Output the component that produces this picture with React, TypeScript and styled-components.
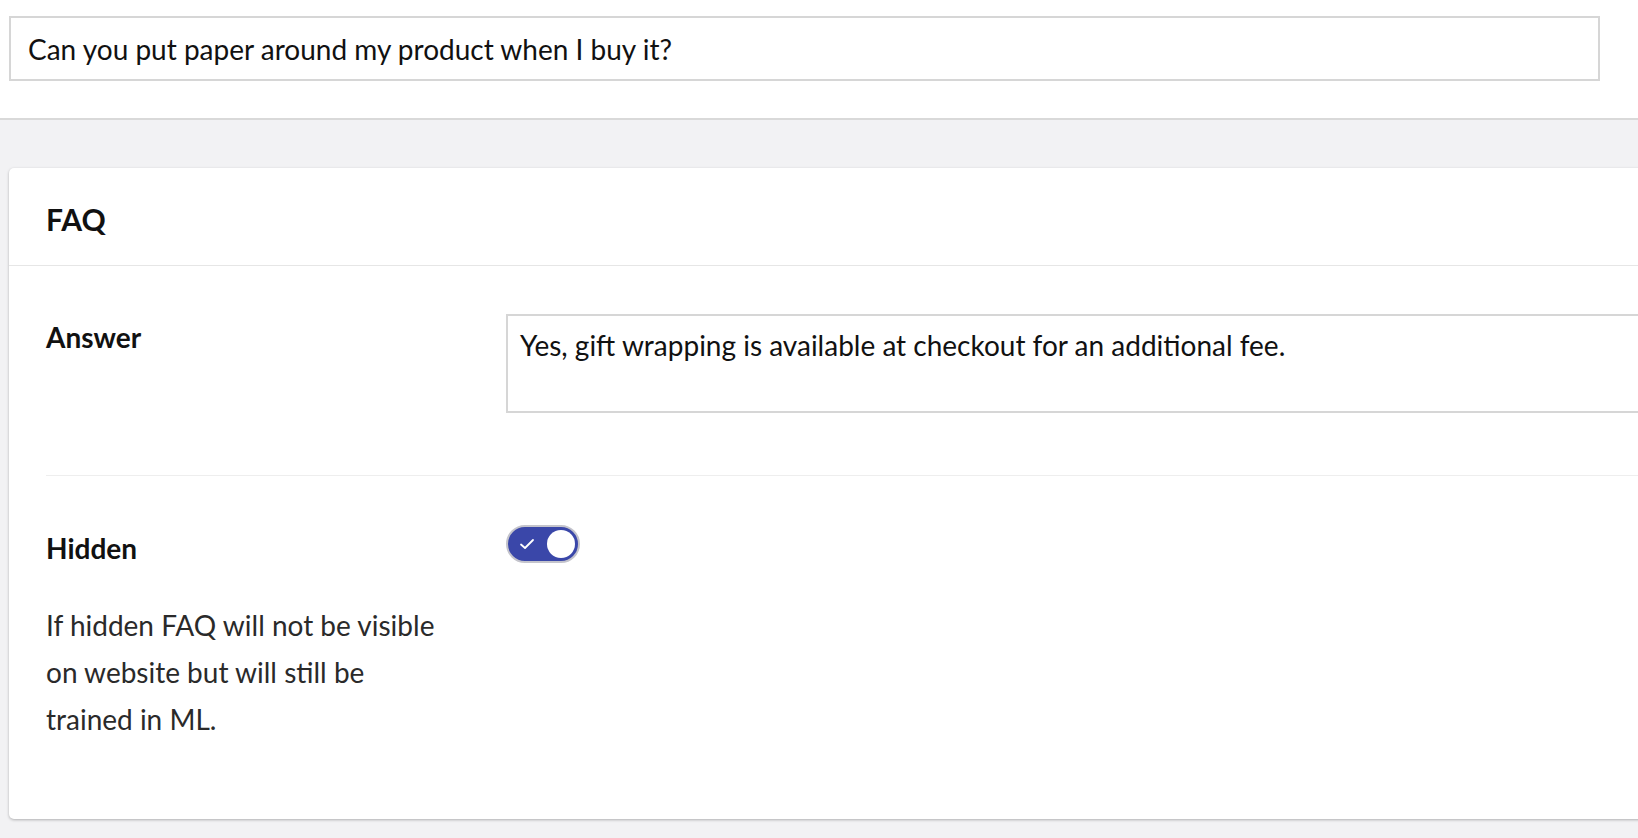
import type { FC } from 'react';
import styled, { createGlobalStyle } from 'styled-components';

const GlobalStyle = createGlobalStyle`
  html, body {
    margin: 0;
    padding: 0;
    background: #f2f2f4;
    font-family: Lato, "Open Sans", sans-serif;
    color: #111;
    overflow: hidden;
  }
  * {
    box-sizing: border-box;
  }
`;

const Page = styled.div`
  min-height: 838px;
  background: #f2f2f4;
`;

const TopBar = styled.header`
  background: #fff;
  padding: 16px 38px 37px 9px;
  border-bottom: 2px solid #d9d9d9;
`;

const QuestionInput = styled.input`
  display: block;
  width: 100%;
  height: 65px;
  padding: 0 17px;
  border: 2px solid #d6d6d6;
  border-radius: 0;
  font-family: inherit;
  font-size: 28px;
  color: #111;
  background: #fff;
  outline: none;
`;

const Main = styled.main`
  padding: 48px 0 0 9px;
`;

const Card = styled.section`
  width: calc(100% + 40px);
  background: #fff;
  border-radius: 5px;
  box-shadow: 0 1px 3px rgba(0, 0, 0, 0.28);
  padding-bottom: 24px;
`;

const CardHeader = styled.div`
  height: 98px;
  display: flex;
  align-items: center;
  padding: 4px 37px 0;
  border-bottom: 1px solid #e6e6e6;
`;

const CardTitle = styled.h2`
  margin: 0;
  font-size: 30px;
  font-weight: 700;
  color: #111;
`;

const CardBody = styled.div`
  padding-left: 37px;
`;

const FieldRow = styled.div<{ $last?: boolean }>`
  display: grid;
  grid-template-columns: 460px 1fr;
  padding: ${p => (p.$last ? '49px 0 52px' : '48px 0 62px')};
  border-bottom: ${p => (p.$last ? 'none' : '1px solid #eeeeee')};
`;

const LabelCol = styled.div`
  display: flex;
  flex-direction: column;
  padding-right: 60px;
`;

const Label = styled.div<{ $offset: number }>`
  margin-top: ${p => p.$offset}px;
  font-size: 28px;
  font-weight: 700;
  line-height: 1.2;
  color: #111;
`;

const Help = styled.p`
  margin: 36px 0 0;
  font-size: 28px;
  line-height: 47px;
  color: #2a2a2a;
`;

const AnswerBox = styled.textarea`
  display: block;
  width: 100%;
  height: 99px;
  padding: 13px 12px;
  border: 2px solid #d6d6d6;
  border-radius: 0;
  font-family: inherit;
  font-size: 28px;
  line-height: 1.2;
  color: #111;
  resize: none;
  outline: none;
`;

const Toggle = styled.button<{ $on: boolean }>`
  position: relative;
  width: 74px;
  height: 38px;
  padding: 0;
  border: 2px solid #c4c4cc;
  border-radius: 19px;
  background: ${p => (p.$on ? '#3a47a9' : '#bdbdbd')};
  cursor: pointer;
`;

const Knob = styled.span`
  position: absolute;
  top: 3px;
  right: 3px;
  width: 28px;
  height: 28px;
  border-radius: 50%;
  background: #fff;
`;

const Check = styled.svg`
  position: absolute;
  left: 11px;
  top: 10px;
`;

const App: FC = () => {
  return (
    <Page>
      <GlobalStyle />
      <TopBar>
        <QuestionInput defaultValue="Can you put paper around my product when I buy it?" />
      </TopBar>
      <Main>
        <Card>
          <CardHeader>
            <CardTitle>FAQ</CardTitle>
          </CardHeader>
          <CardBody>
            <FieldRow>
              <LabelCol>
                <Label $offset={7}>Answer</Label>
              </LabelCol>
              <AnswerBox defaultValue="Yes, gift wrapping is available at checkout for an additional fee." />
            </FieldRow>
            <FieldRow $last>
              <LabelCol>
                <Label $offset={7}>Hidden</Label>
                <Help>If hidden FAQ will not be visible on website but will still be trained in ML.</Help>
              </LabelCol>
              <div>
                <Toggle $on type="button" aria-pressed="true">
                  <Check width="16" height="14" viewBox="0 0 16 14">
                    <path d="M2 7.5 L6 11 L14 3" fill="none" stroke="#fff" strokeWidth="1.8" strokeLinecap="round" strokeLinejoin="round" />
                  </Check>
                  <Knob />
                </Toggle>
              </div>
            </FieldRow>
          </CardBody>
        </Card>
      </Main>
    </Page>
  );
};

export default App;
